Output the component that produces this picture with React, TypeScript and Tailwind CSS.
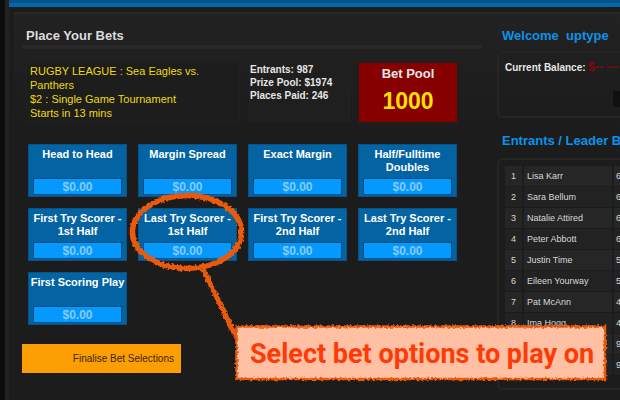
import React from "react";

const bets: { id: string; label: string }[] = [
  { id: "head", label: "Head to Head" },
  { id: "margin", label: "Margin Spread" },
  { id: "exact", label: "Exact Margin" },
  { id: "doubles", label: "Half/Fulltime Doubles" },
  { id: "first-1", label: "First Try Scorer - 1st Half" },
  { id: "last-1", label: "Last Try Scorer - 1st Half" },
  { id: "first-2", label: "First Try Scorer - 2nd Half" },
  { id: "last-2", label: "Last Try Scorer - 2nd Half" },
  { id: "play", label: "First Scoring Play" },
];

const leaders: [string, string, string][] = [
  ["1", "Lisa Karr", "6"],
  ["2", "Sara Bellum", "6"],
  ["3", "Natalie Attired", "6"],
  ["4", "Peter Abbott", "6"],
  ["5", "Justin Time", "5"],
  ["6", "Eileen Yourway", "5"],
  ["7", "Pat McAnn", "4"],
  ["8", "Ima Hogg", "4"],
  ["", "", "9"],
  ["", "", "9"],
];

function BetCard({ id, label }: { id: string; label: string }) {
  return (
    <div className="flex h-[53px] flex-col justify-between border border-[#075286] bg-[#0463a2] px-1 pt-[3px] pb-px">
      <label htmlFor={id} className="-mx-1 text-center text-[11px] leading-[13px] font-bold text-white">
        {label}
      </label>
      <input
        id={id}
        type="text"
        defaultValue="$0.00"
        className="h-[17px] w-full border border-[#07518a] bg-[#0599fd] text-center text-[12px] leading-[15px] font-bold text-[#86cbff] outline-none"
      />
    </div>
  );
}

function Callout() {
  return (
    <div className="pointer-events-none absolute top-0 left-0">
      <svg width="620" height="400" viewBox="0 0 620 400" fill="none" aria-hidden="true">
        <defs>
          <filter id="rough" x="0" y="0" width="620" height="400" filterUnits="userSpaceOnUse">
            <feTurbulence type="fractalNoise" baseFrequency="0.4" numOctaves="2" seed="4" />
            <feDisplacementMap in="SourceGraphic" scale="4" xChannelSelector="R" yChannelSelector="G" />
          </filter>
        </defs>
        <g filter="url(#rough)" stroke="#ea5a10">
          <ellipse cx="187" cy="232" rx="54.5" ry="36.5" strokeWidth="5.5" />
          <path d="M203 269 L236 337" strokeWidth="5" />
          <rect x="236.5" y="326.5" width="368.5" height="52.5" fill="#ffc0a4" strokeWidth="2.5" />
        </g>
      </svg>
      <p className="absolute top-[327px] left-[250px] font-['Roboto','Liberation_Sans',sans-serif] text-[27px] leading-[54px] font-bold whitespace-nowrap text-[#ff3a05]">
        Select bet options to play on
      </p>
    </div>
  );
}

export default function App() {
  return (
    <div className="relative flex h-screen overflow-hidden bg-[#1c1c1c] font-['Liberation_Sans',Arial,sans-serif] text-[#e6e6e6]">
      <div className="w-[9px] shrink-0 border-r-4 border-[#232323] bg-[#0d0d0f]" />
      <div className="min-w-0 flex-1">
        <div className="h-[7px] border-t-[3px] border-[#07548a] bg-[#0467a8]" />
        <div className="mt-[5px] ml-[5px] flex gap-[15px] border-t-2 border-[#292929] bg-linear-to-b from-[#222222] to-[#1c1c1c] to-30% pl-2">
          <main className="w-[460px] shrink-0">
            <h1 className="border-b-4 border-[#282828] pt-[14px] pb-px pl-1 text-[13px] leading-4 font-bold text-[#dcdcdc]">
              Place Your Bets
            </h1>
            <div className="mt-3 flex items-stretch gap-[9px] pl-1">
              <div className="w-[214px] border border-[#202020] bg-[#1d1d1d] pt-[2px] pl-[3px] text-[11px] leading-[14px] text-[#eed911]">
                <p className="w-[190px]">RUGBY LEAGUE : Sea Eagles vs. Panthers</p>
                <p>$2 : Single Game Tournament</p>
                <p>Starts in 13 mins</p>
              </div>
              <div className="w-[101px] border border-[#222222] bg-[#1f1f1f] pt-px text-[10px] leading-[13px] font-bold whitespace-nowrap">
                <p>Entrants: 987</p>
                <p>Prize Pool: $1974</p>
                <p>Places Paid: 246</p>
              </div>
              <div className="mt-[2px] h-[59px] w-[98px] bg-[#860000] pt-[3px] text-center font-bold">
                <p className="text-[13px] leading-4">Bet Pool</p>
                <p className="pt-[5px] text-[23px] leading-[28px] text-[#ffdf00]">1000</p>
              </div>
            </div>
            <form>
              <div className="mt-[22px] ml-[6px] grid w-[429px] grid-cols-4 gap-[11px]">
                {bets.map((bet) => (
                  <BetCard key={bet.id} id={bet.id} label={bet.label} />
                ))}
              </div>
              <button
                type="button"
                className="mt-[19px] h-[29px] w-[159px] bg-[#fc9f05] pr-[7px] text-right text-[10px] text-[#3d2500]"
              >
                Finalise Bet Selections
              </button>
            </form>
          </main>
          <aside className="min-w-[240px] flex-1">
            <h2 className="pt-[14px] pl-[5px] text-[13px] leading-4 font-bold whitespace-pre text-[#0b93e9]">
              {"Welcome  uptype"}
            </h2>
            <div className="mt-[7px] flex h-[67px] flex-col justify-between rounded-md border-2 border-[#252525] px-[6px] pt-[6px] pb-[9px] text-[10px] font-bold">
              <p className="leading-4">
                Current Balance: <span className="text-[12px] text-[#8c0505]">$-- --- --</span>
              </p>
              <div className="ml-[108px] h-4 w-20 bg-[#101012]" />
            </div>
            <h2 className="pt-[15px] pl-[5px] text-[13px] leading-4 font-bold whitespace-nowrap text-[#0b93e9]">
              Entrants / Leader Board
            </h2>
            <div className="mt-[9px] rounded-md border-2 border-[#252525] px-[4px] pt-[5px] pb-[12px]">
              <table className="w-full table-fixed border-separate border-spacing-x-[2px] border-spacing-y-px text-[9px] leading-5 text-[#d8d8d8]">
                <colgroup>
                  <col className="w-[17px]" />
                  <col className="w-[88px]" />
                  <col />
                </colgroup>
                <tbody>
                  {leaders.map(([rank, name, score], i) => (
                    <tr key={i} className="h-5 odd:bg-[#262626] even:bg-[#222222]">
                      <td className="p-0 text-center">{rank}</td>
                      <td className="p-0 pl-[3px]">{name}</td>
                      <td className="p-0 pl-[2px]">{score}</td>
                    </tr>
                  ))}
                </tbody>
              </table>
            </div>
          </aside>
        </div>
      </div>
      <Callout />
    </div>
  );
}
